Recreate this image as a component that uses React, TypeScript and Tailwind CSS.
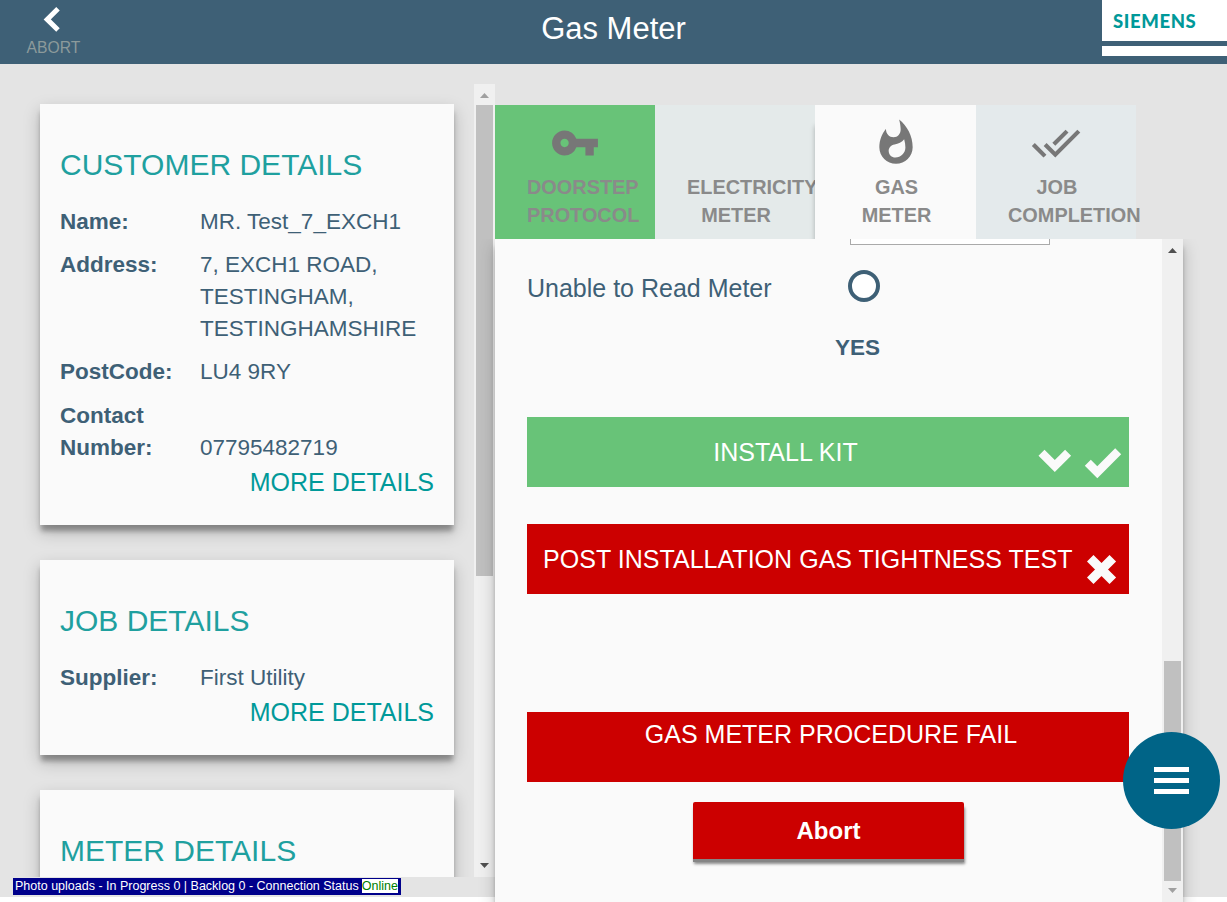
import type { ReactNode } from "react";
import { MdVpnKey, MdWhatshot, MdDoneAll } from "react-icons/md";

const cardShadow = "shadow-[0_7px_5px_-1px_rgba(0,0,0,0.3),0_7px_16px_rgba(0,0,0,0.22)]";

function Arrow({ up, color }: { up?: boolean; color: string }) {
  return (
    <svg width="9" height="5" viewBox="0 0 9 5" fill={color} className="shrink-0">
      <path d={up ? "M4.5 0L9 5H0Z" : "M0 0H9L4.5 5Z"} />
    </svg>
  );
}

function Card({ title, className, children }: { title: string; className: string; children?: ReactNode }) {
  return (
    <section className={`shrink-0 bg-[#fafafa] px-5 pt-[43px] ${cardShadow} ${className}`}>
      <h2 className="mb-[23px] text-[30px] leading-9 whitespace-nowrap text-[#1fa09f]">{title}</h2>
      {children}
    </section>
  );
}

function Row({ label, children, className = "mb-[11px]" }: { label: string; children: ReactNode; className?: string }) {
  return (
    <div className={`flex items-end text-[22.5px] leading-8 text-[#3e6076] ${className}`}>
      <div className="w-[140px] shrink-0 self-start pr-4 font-bold">{label}</div>
      <div className="whitespace-nowrap">{children}</div>
    </div>
  );
}

function More() {
  return <a className="mt-0.5 block text-right text-[25px] leading-8 whitespace-nowrap text-[#009999]">MORE DETAILS</a>;
}

function Tab({ lines, icon, className }: { lines: [string, string]; icon?: ReactNode; className: string }) {
  return (
    <div className={`h-[134px] shrink-0 px-8 pt-[13px] ${className}`}>
      <div className="flex h-[55px] justify-center text-[#777]">{icon}</div>
      <div className="text-center text-[19.9px] leading-7 font-bold text-[#8a8a8a]">
        <div className="-mr-0.5">{lines[0]}</div>
        <div className="-mr-0.5">{lines[1]}</div>
      </div>
    </div>
  );
}

export default function App() {
  return (
    <div className="relative flex h-[902px] w-[1227px] flex-col overflow-hidden bg-white font-['Liberation_Sans',Arial,sans-serif]">
      <header className="flex h-16 shrink-0 bg-[#3e6076]">
        <div className="flex w-[107px] flex-col items-center pt-[7px]">
          <svg width="18" height="25" viewBox="0 0 18 25" className="-ml-[3px]" fill="none" stroke="#fff" strokeWidth="5">
            <path d="M15 1.8L4.2 12.4L15 23" />
          </svg>
          <span className="mt-1.5 text-[15.7px] leading-5 text-[#8c9a9b]">ABORT</span>
        </div>
        <h1 className="flex-1 pt-[9px] pl-[18px] text-center text-[31px] leading-10 text-white">Gas Meter</h1>
        <div className="h-14 w-[125px] bg-white">
          <div className="flex h-[41px] items-center pt-[3px] pl-[11px] font-['Lato',sans-serif] text-[18.5px] font-black tracking-[0.6px] text-[#009999]">
            SIEMENS
          </div>
          <div className="h-[5px] bg-[#3e6076]" />
        </div>
      </header>

      <div className="flex h-[838px]">
        <div className="flex h-[833px] w-[495px] shrink-0 flex-col bg-[#e4e4e4]">
          <div className="mt-5 flex h-[793px] overflow-hidden">
            <aside className="flex w-[474px] flex-col gap-[35px] overflow-hidden pt-5 pr-5 pl-10">
              <Card title="CUSTOMER DETAILS" className="h-[421px]">
                <Row label="Name:">MR. Test_7_EXCH1</Row>
                <Row label="Address:">
                  7, EXCH1 ROAD,
                  <br />
                  TESTINGHAM,
                  <br />
                  TESTINGHAMSHIRE
                </Row>
                <Row label="PostCode:" className="mb-3">LU4 9RY</Row>
                <Row label="Contact Number:" className="">07795482719</Row>
                <More />
              </Card>
              <Card title="JOB DETAILS" className="h-[195px]">
                <Row label="Supplier:" className="">First Utility</Row>
                <More />
              </Card>
              <Card title="METER DETAILS" className="h-[195px]" />
            </aside>
            <div className="flex w-[21px] flex-col items-center bg-[#f0f0f0] pt-[9px]">
              <Arrow up color="#a0a0a0" />
              <div className="mt-[7px] h-[471px] w-[17px] bg-[#c0c0c0]" />
              <div className="flex-1" />
              <Arrow color="#505050" />
              <div className="h-[9px]" />
            </div>
          </div>
          <div className="mt-px ml-[13px] flex h-[17px] w-[388px] items-start bg-[#00008b] pt-px pl-0.5 text-[12.5px] leading-[14px] whitespace-nowrap text-white">
            <span className="mr-[3px]">Photo uploads - In Progress 0 | Backlog 0 - Connection Status</span>
            <span className="h-[14px] bg-white text-[#008000]">Online</span>
          </div>
        </div>

        <div className="flex w-[732px] flex-col">
          <nav className="flex h-[175px] shrink-0 bg-[#e4e4e4] pt-[41px]">
            <Tab lines={["DOORSTEP", "PROTOCOL"]} icon={<MdVpnKey size={50} />} className="w-40 bg-[#68c378]" />
            <Tab lines={["ELECTRICITY", "METER"]} className="w-40 bg-[#e4eaea]" />
            <Tab
              lines={["GAS", "METER"]}
              icon={<MdWhatshot size={50} />}
              className="relative w-[161px] bg-[#fafafa] shadow-[-1px_20px_5px_-1px_rgba(0,0,0,0.25)]"
            />
            <Tab lines={["JOB", "COMPLETION"]} icon={<MdDoneAll size={50} />} className="relative w-40 bg-[#e4eaec]" />
          </nav>
          <div className="h-[658px] bg-[#e4e4e4]">
            <main className="relative flex h-[663px] w-[688px] bg-[#fafafa] shadow-[0_7px_5px_-1px_rgba(0,0,0,0.3),0_7px_16px_rgba(0,0,0,0.22)] [clip-path:inset(0_-44px_0_-25px)]">
              <div className="flex w-[667px] flex-col pl-8">
                <div className="ml-[323px] h-1.5 w-[200px] shrink-0 border border-t-0 border-[#aaa] bg-white" />
                <div className="mt-[25px] flex text-[#3e6076]">
                  <div className="w-[321px] pt-0.5 text-[25px] leading-8">Unable to Read Meter</div>
                  <div className="size-8 rounded-full border-4 border-[#3e6076] bg-white" />
                </div>
                <div className="mt-[28px] pl-[308px] text-[22.5px] leading-8 font-bold text-[#3e6076]">YES</div>
                <div className="mt-[53px] flex h-[70px] w-[602px] shrink-0 bg-[#68c378] text-[25px] leading-[70px] text-white">
                  <div className="w-[517px] text-center">INSTALL KIT</div>
                  <svg width="85" height="70" viewBox="0 0 85 70" className="overflow-visible" fill="none" stroke="#fafafa" strokeWidth="8.5">
                    <path d="M-2.5 35.7L10.8 49L24.1 35.7" />
                    <path d="M43.8 45.8L53.3 55.2L74.2 34.2" />
                  </svg>
                </div>
                <div className="mt-[37px] flex h-[70px] w-[602px] shrink-0 bg-[#cc0000] text-[25px] leading-[70px] text-white">
                  <div className="w-[560px] pl-4 tracking-[0.03px] whitespace-nowrap">POST INSTALLATION GAS TIGHTNESS TEST</div>
                  <svg width="42" height="70" viewBox="0 0 42 70" fill="none" stroke="#fafafa" strokeWidth="9.3">
                    <path d="M3.2 34.2L25.8 56.8M25.8 34.2L3.2 56.8" />
                  </svg>
                </div>
                <div className="mt-[118px] h-[70px] w-[602px] shrink-0 bg-[#cc0000] pt-1.5 pl-1.5 text-center text-[25px] leading-8 text-white">
                  GAS METER PROCEDURE FAIL
                </div>
                <button className="mt-5 ml-[166px] h-[57px] w-[271px] shrink-0 rounded-t-[2px] bg-[#cc0000] text-[24px] font-bold text-white shadow-[0_3px_0_#858585,1px_5px_3px_rgba(0,0,0,0.45)]">
                  Abort
                </button>
              </div>
              <div className="flex w-[21px] flex-col items-center bg-[#f0f0f0] pt-[9px]">
                <Arrow up color="#505050" />
                <div className="flex-1" />
                <div className="mb-[7px] h-[220px] w-[17px] bg-[#c0c0c0]" />
                <Arrow color="#a0a0a0" />
                <div className="h-[9px]" />
              </div>
            </main>
          </div>
        </div>
      </div>

      <button className="absolute top-[732px] left-[1123px] flex size-[97px] flex-col items-center justify-center gap-1.5 rounded-full bg-[#006487]">
        <span className="h-[5px] w-[35px] bg-white" />
        <span className="h-[5px] w-[35px] bg-white" />
        <span className="h-[5px] w-[35px] bg-white" />
      </button>
    </div>
  );
}
